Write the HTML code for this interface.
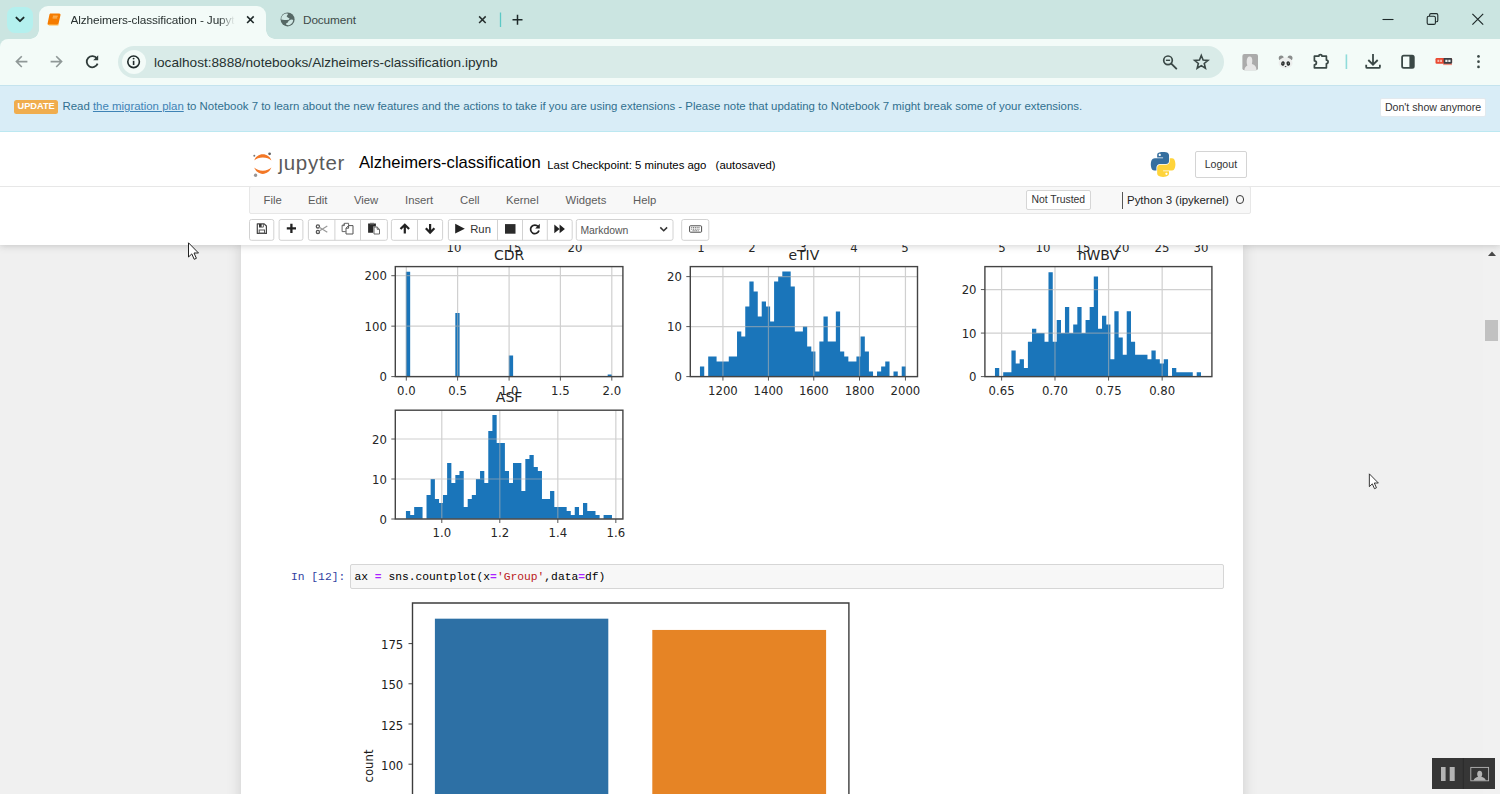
<!DOCTYPE html>
<html lang="en">
<head>
<meta charset="utf-8">
<title>Alzheimers-classification - Jupyter Notebook</title>
<style>
html,body{margin:0;padding:0;}
body{width:1500px;height:794px;overflow:hidden;position:relative;background:#f0f0f0;font-family:"Liberation Sans",Arial,sans-serif;color:#000;}
.abs{position:absolute;}
/* ---------- browser chrome ---------- */
#tabstrip{left:0;top:0;width:1500px;height:48px;background:#cbe5e1;}
#tabdrop{left:7px;top:7px;width:26px;height:26px;border-radius:8px;background:#b4f0ee;}
#tab1{left:39px;top:6px;width:227px;height:33.5px;background:#f3fbf8;border-radius:9px 9px 0 0;}
#tab1:before,#tab1:after{content:"";position:absolute;bottom:1px;width:9px;height:9px;}
#tab1:before{left:-9px;background:radial-gradient(circle at 0 0,rgba(0,0,0,0) 8.5px,#f3fbf8 9px);}
#tab1:after{right:-9px;background:radial-gradient(circle at 100% 0,rgba(0,0,0,0) 8.5px,#f3fbf8 9px);}
.tabtxt{font-size:11.8px;letter-spacing:-0.12px;color:#27302f;white-space:nowrap;top:13.2px;line-height:14px;}
#toolbar{left:0;top:38.7px;width:1500px;height:46.3px;background:#f3fbf8;border-radius:8px 0 0 0;}
#omni{left:117.8px;top:45.6px;width:1106.6px;height:32.1px;border-radius:16px;background:#d9ebe8;}
#omni .ic{left:4px;top:4px;width:24px;height:24px;border-radius:12px;background:#f3fbf8;}
#url{left:154px;top:54.7px;font-size:13.62px;line-height:16px;color:#263130;white-space:nowrap;}
/* ---------- banner ---------- */
#banner{left:0;top:84.5px;width:1500px;height:45px;background:#d9edf7;border-top:1px solid #c4e3ee;border-bottom:1px solid #bce8f1;box-sizing:content-box;}
#banner .msg{left:14px;top:13.6px;font-size:11.43px;line-height:14px;color:#31708f;white-space:nowrap;}
#banner .lbl{display:inline-block;background:#f0ad4e;color:#fff;font-weight:bold;font-size:9.2px;line-height:13.4px;padding:0 3.6px;border-radius:2.5px;vertical-align:0.8px;margin-right:1px;}
#banner u{color:#3f83b5;}
#dsa{left:1380px;top:12px;width:104px;height:17px;border:1px solid #e2e9ee;background:#fff;border-radius:2px;font-size:10.6px;line-height:16.5px;text-align:center;color:#333;box-sizing:content-box;}
/* ---------- jupyter header ---------- */
#header{left:0;top:130.5px;width:1500px;height:114.1px;background:#fff;box-shadow:0 1px 7px rgba(87,87,87,0.28);}
#hdrline{left:0;top:186.2px;width:1500px;height:1px;background:#e7e7e7;}
#jtext{left:278.4px;top:150.6px;font-size:20.5px;line-height:24px;color:#5a5a5a;letter-spacing:0.75px;white-space:nowrap;}
#nbname{left:359px;top:153px;font-size:16.6px;line-height:20px;color:#000;white-space:nowrap;}
#ckpt{left:547.3px;top:158px;font-size:11.37px;line-height:14px;color:#000;white-space:nowrap;}
#logout{left:1195px;top:151px;width:49.8px;height:24.8px;border:1px solid #d4d4d4;border-radius:2px;background:#fff;font-size:10.6px;line-height:25.6px;text-align:center;color:#333;box-sizing:content-box;}
#menubar{left:249px;top:186.2px;width:1001.5px;height:28.2px;background:#f8f8f8;border:1px solid #e7e7e7;border-radius:2px;box-sizing:border-box;}
.mi{top:192.7px;font-size:11.3px;line-height:14px;color:#5c5c5c;white-space:nowrap;}
#nottrusted{left:1025.8px;top:189.8px;width:63px;height:17.8px;border:1px solid #d6d6d6;background:#fff;border-radius:2px;font-size:10.4px;line-height:18.2px;text-align:center;color:#333;box-sizing:content-box;}
#kname{left:1127px;top:192.8px;font-size:11.45px;line-height:14px;color:#222;white-space:nowrap;}
#kbar{left:1121.5px;top:192px;width:1px;height:16.8px;background:#555;}
#kind{left:1235.7px;top:194.8px;width:6.8px;height:6.8px;border:1.8px solid #3a3a3a;border-radius:50%;box-sizing:content-box;}
.tb{top:219px;height:21px;border:1px solid #ccc;background:#fff;box-sizing:border-box;}
.tb.l{border-radius:2px 0 0 2px;}
.tb.r{border-radius:0 2px 2px 0;}
.tb.s{border-radius:2px;}
.tb svg{position:absolute;left:0;top:0;}
#runtxt{left:470.2px;top:221.8px;font-size:11.3px;line-height:14px;color:#333;}
#celltype{left:576px;top:219px;width:96px;height:21px;border:1px solid #ccc;border-radius:2px;background:#fff;box-sizing:border-box;}
#celltype span{position:absolute;left:3.5px;top:4.5px;font-size:10.2px;line-height:12px;color:#555;}
/* ---------- notebook ---------- */
#nbc{left:241px;top:244px;width:1002px;height:560px;background:#fff;box-shadow:0 0 12px 1px rgba(87,87,87,0.2);}
.plots{position:absolute;left:0;top:0;}
.plots text{font-family:"DejaVu Sans","Liberation Sans",sans-serif;}
.tk{font-size:11.7px;fill:#262626;}
.tk2{font-size:11.7px;fill:#1c1c1c;}
.tt{font-size:14px;fill:#262626;}
#prompt{left:291px;top:569.5px;font-family:"Liberation Mono","DejaVu Sans Mono",monospace;font-size:11.3px;line-height:14px;color:#303f9f;white-space:pre;}
#inarea{left:350px;top:563.5px;width:873.5px;height:25px;background:#f7f7f7;border:1px solid #d6d6d6;border-radius:2px;box-sizing:border-box;}
#code{left:354.5px;top:569.5px;font-family:"Liberation Mono","DejaVu Sans Mono",monospace;font-size:11.3px;line-height:14px;color:#000;white-space:pre;}
#code .o{color:#aa22ff;font-weight:bold;}
#code .s{color:#ba2121;}
/* ---------- scrollbar / overlays ---------- */
#sbar{left:1483px;top:245px;width:17px;height:549px;background:#f1f1f1;}
#sthumb{left:1485px;top:319.5px;width:13px;height:21px;background:#c1c1c1;}
#rec{left:1432px;top:758px;width:63px;height:31px;background:#363636;}
</style>
</head>
<body>
<!-- notebook area -->
<div id="nbc" class="abs"></div>
<svg class="plots" width="1500" height="794" viewBox="0 0 1500 794">
<text x="454" y="251.600" text-anchor="middle" class="tk">10</text>
<text x="514" y="251.600" text-anchor="middle" class="tk">15</text>
<text x="575" y="251.600" text-anchor="middle" class="tk">20</text>
<text x="701" y="251.600" text-anchor="middle" class="tk">1</text>
<text x="752" y="251.600" text-anchor="middle" class="tk">2</text>
<text x="803" y="251.600" text-anchor="middle" class="tk">3</text>
<text x="854" y="251.600" text-anchor="middle" class="tk">4</text>
<text x="905" y="251.600" text-anchor="middle" class="tk">5</text>
<text x="1002" y="251.600" text-anchor="middle" class="tk">5</text>
<text x="1043" y="251.600" text-anchor="middle" class="tk">10</text>
<text x="1083" y="251.600" text-anchor="middle" class="tk">15</text>
<text x="1122" y="251.600" text-anchor="middle" class="tk">20</text>
<text x="1162" y="251.600" text-anchor="middle" class="tk">25</text>
<text x="1201" y="251.600" text-anchor="middle" class="tk">30</text>
<path d="M405.9 376.6H410.17V271.66H405.9ZM455.32 376.6H459.58V313.03H455.32ZM508.85 376.6H513.12V355.41H508.85ZM607.68 376.6H611.95V374.58H607.68Z" fill="#1a75ba"/>
<path d="M406.3 266.6V376.6M457.6 266.6V376.6M509.1 266.6V376.6M560.4 266.6V376.6M611.8 266.6V376.6M395.3 376.6H622.9M395.3 326.15H622.9M395.3 275.7H622.9" stroke="#b0b0b0" stroke-width="1.2" fill="none" opacity="0.6"/>
<path d="M406.3 376.6v4M457.6 376.6v4M509.1 376.6v4M560.4 376.6v4M611.8 376.6v4M395.3 376.6h-4M395.3 326.15h-4M395.3 275.7h-4" stroke="#444444" stroke-width="0.9" fill="none"/>
<rect x="395.3" y="266.6" width="227.6" height="110" fill="none" stroke="#444444" stroke-width="1.4"/>
<text x="406.3" y="394.6" text-anchor="middle" class="tk">0.0</text>
<text x="457.6" y="394.6" text-anchor="middle" class="tk">0.5</text>
<text x="509.1" y="394.6" text-anchor="middle" class="tk">1.0</text>
<text x="560.4" y="394.6" text-anchor="middle" class="tk">1.5</text>
<text x="611.8" y="394.6" text-anchor="middle" class="tk">2.0</text>
<text x="386.9" y="381.2" text-anchor="end" class="tk">0</text>
<text x="386.9" y="330.75" text-anchor="end" class="tk">100</text>
<text x="386.9" y="280.3" text-anchor="end" class="tk">200</text>
<text x="509.1" y="259.6" text-anchor="middle" class="tt">CDR</text>
<path d="M699.96 376.6H704.23V366.6H699.96ZM708.2 376.6H712.46V356.6H708.2ZM712.31 376.6H716.58V356.6H712.31ZM716.43 376.6H720.7V361.6H716.43ZM720.55 376.6H724.82V361.6H720.55ZM724.67 376.6H728.93V361.6H724.67ZM728.78 376.6H733.05V356.6H728.78ZM732.9 376.6H737.17V356.6H732.9ZM737.02 376.6H741.29V331.6H737.02ZM741.14 376.6H745.4V336.6H741.14ZM745.25 376.6H749.52V306.6H745.25ZM749.37 376.6H753.64V281.6H749.37ZM753.49 376.6H757.76V291.6H753.49ZM757.61 376.6H761.87V316.6H757.61ZM761.72 376.6H765.99V301.6H761.72ZM765.84 376.6H770.11V306.6H765.84ZM769.96 376.6H774.23V321.6H769.96ZM774.08 376.6H778.35V281.6H774.08ZM778.2 376.6H782.46V276.6H778.2ZM782.31 376.6H786.58V271.6H782.31ZM786.43 376.6H790.7V271.6H786.43ZM790.55 376.6H794.82V286.6H790.55ZM794.67 376.6H798.93V331.6H794.67ZM798.78 376.6H803.05V331.6H798.78ZM802.9 376.6H807.17V326.6H802.9ZM807.02 376.6H811.29V346.6H807.02ZM811.14 376.6H815.4V351.6H811.14ZM815.25 376.6H819.52V371.6H815.25ZM819.37 376.6H823.64V341.6H819.37ZM823.49 376.6H827.76V316.6H823.49ZM827.61 376.6H831.87V341.6H827.61ZM831.72 376.6H835.99V341.6H831.72ZM835.84 376.6H840.11V311.6H835.84ZM839.96 376.6H844.23V351.6H839.96ZM844.08 376.6H848.35V356.6H844.08ZM848.2 376.6H852.46V361.6H848.2ZM852.31 376.6H856.58V361.6H852.31ZM856.43 376.6H860.7V356.6H856.43ZM860.55 376.6H864.82V336.6H860.55ZM864.67 376.6H868.93V351.6H864.67ZM868.78 376.6H873.05V371.6H868.78ZM877.02 376.6H881.29V371.6H877.02ZM881.14 376.6H885.4V366.6H881.14ZM885.25 376.6H889.52V361.6H885.25ZM893.49 376.6H897.76V371.6H893.49ZM901.72 376.6H905.99V366.6H901.72Z" fill="#1a75ba"/>
<path d="M722.93 266.6V376.6M768.45 266.6V376.6M813.78 266.6V376.6M859.51 266.6V376.6M905.44 266.6V376.6M690.3 376.6H917.5M690.3 326.6H917.5M690.3 276.6H917.5" stroke="#b0b0b0" stroke-width="1.2" fill="none" opacity="0.6"/>
<path d="M722.93 376.6v4M768.45 376.6v4M813.78 376.6v4M859.51 376.6v4M905.44 376.6v4M690.3 376.6h-4M690.3 326.6h-4M690.3 276.6h-4" stroke="#444444" stroke-width="0.9" fill="none"/>
<rect x="690.3" y="266.6" width="227.2" height="110" fill="none" stroke="#444444" stroke-width="1.4"/>
<text x="722.93" y="394.6" text-anchor="middle" class="tk">1200</text>
<text x="768.45" y="394.6" text-anchor="middle" class="tk">1400</text>
<text x="813.78" y="394.6" text-anchor="middle" class="tk">1600</text>
<text x="859.51" y="394.6" text-anchor="middle" class="tk">1800</text>
<text x="905.44" y="394.6" text-anchor="middle" class="tk">2000</text>
<text x="681.9" y="381.2" text-anchor="end" class="tk">0</text>
<text x="681.9" y="331.2" text-anchor="end" class="tk">10</text>
<text x="681.9" y="281.2" text-anchor="end" class="tk">20</text>
<text x="803.9" y="259.6" text-anchor="middle" class="tt">eTIV</text>
<path d="M994.96 376.6H999.23V367.9H994.96ZM1003.2 376.6H1007.46V372.25H1003.2ZM1007.31 376.6H1011.58V372.25H1007.31ZM1011.43 376.6H1015.7V350.49H1011.43ZM1015.55 376.6H1019.82V363.55H1015.55ZM1019.67 376.6H1023.93V359.19H1019.67ZM1023.78 376.6H1028.05V367.9H1023.78ZM1027.9 376.6H1032.17V341.79H1027.9ZM1032.02 376.6H1036.29V328.74H1032.02ZM1036.14 376.6H1040.4V333.09H1036.14ZM1040.25 376.6H1044.52V333.09H1040.25ZM1044.37 376.6H1048.64V341.79H1044.37ZM1048.49 376.6H1052.76V272.17H1048.49ZM1052.61 376.6H1056.87V341.79H1052.61ZM1056.72 376.6H1060.99V320.03H1056.72ZM1060.84 376.6H1065.11V333.09H1060.84ZM1064.96 376.6H1069.23V306.98H1064.96ZM1069.08 376.6H1073.35V333.09H1069.08ZM1073.2 376.6H1077.46V324.38H1073.2ZM1077.31 376.6H1081.58V306.98H1077.31ZM1081.43 376.6H1085.7V333.09H1081.43ZM1085.55 376.6H1089.82V320.03H1085.55ZM1089.67 376.6H1093.93V306.98H1089.67ZM1093.78 376.6H1098.05V276.52H1093.78ZM1097.9 376.6H1102.17V328.74H1097.9ZM1102.02 376.6H1106.29V315.68H1102.02ZM1106.14 376.6H1110.4V324.38H1106.14ZM1110.25 376.6H1114.52V359.19H1110.25ZM1114.37 376.6H1118.64V311.33H1114.37ZM1118.49 376.6H1122.76V337.44H1118.49ZM1122.61 376.6H1126.87V354.84H1122.61ZM1126.72 376.6H1130.99V311.33H1126.72ZM1130.84 376.6H1135.11V341.79H1130.84ZM1134.96 376.6H1139.23V354.84H1134.96ZM1139.08 376.6H1143.35V354.84H1139.08ZM1143.2 376.6H1147.46V354.84H1143.2ZM1147.31 376.6H1151.58V359.19H1147.31ZM1151.43 376.6H1155.7V350.49H1151.43ZM1155.55 376.6H1159.82V359.19H1155.55ZM1159.67 376.6H1163.93V363.55H1159.67ZM1163.78 376.6H1168.05V359.19H1163.78ZM1172.02 376.6H1176.29V367.9H1172.02ZM1176.14 376.6H1180.4V372.25H1176.14ZM1180.25 376.6H1184.52V372.25H1180.25ZM1184.37 376.6H1188.64V372.25H1184.37ZM1188.49 376.6H1192.76V372.25H1188.49ZM1196.72 376.6H1200.99V372.25H1196.72Z" fill="#1a75ba"/>
<path d="M1001.61 266.6V376.6M1054.99 266.6V376.6M1108.58 266.6V376.6M1162.16 266.6V376.6M984.9 376.6H1211.9M984.9 333.09H1211.9M984.9 289.57H1211.9" stroke="#b0b0b0" stroke-width="1.2" fill="none" opacity="0.6"/>
<path d="M1001.61 376.6v4M1054.99 376.6v4M1108.58 376.6v4M1162.16 376.6v4M984.9 376.6h-4M984.9 333.09h-4M984.9 289.57h-4" stroke="#444444" stroke-width="0.9" fill="none"/>
<rect x="984.9" y="266.6" width="227" height="110" fill="none" stroke="#444444" stroke-width="1.4"/>
<text x="1001.61" y="394.6" text-anchor="middle" class="tk">0.65</text>
<text x="1054.99" y="394.6" text-anchor="middle" class="tk">0.70</text>
<text x="1108.58" y="394.6" text-anchor="middle" class="tk">0.75</text>
<text x="1162.16" y="394.6" text-anchor="middle" class="tk">0.80</text>
<text x="976.5" y="381.2" text-anchor="end" class="tk">0</text>
<text x="976.5" y="337.69" text-anchor="end" class="tk">10</text>
<text x="976.5" y="294.17" text-anchor="end" class="tk">20</text>
<text x="1098.4" y="259.6" text-anchor="middle" class="tt">nWBV</text>
<path d="M405.93 519H410.2V511H405.93ZM410.05 519H414.32V515H410.05ZM414.17 519H418.43V507H414.17ZM418.28 519H422.55V507H418.28ZM426.52 519H430.79V495.01H426.52ZM430.64 519H434.9V479.01H430.64ZM434.75 519H439.02V499.01H434.75ZM438.87 519H443.14V503H438.87ZM442.99 519H447.26V495.01H442.99ZM447.11 519H451.37V463.02H447.11ZM451.22 519H455.49V483.01H451.22ZM455.34 519H459.61V475.01H455.34ZM459.46 519H463.73V471.01H459.46ZM463.58 519H467.85V507H463.58ZM467.7 519H471.96V499.01H467.7ZM471.81 519H476.08V495.01H471.81ZM475.93 519H480.2V479.01H475.93ZM480.05 519H484.32V471.01H480.05ZM484.17 519H488.43V483.01H484.17ZM488.28 519H492.55V431.03H488.28ZM492.4 519H496.67V415.03H492.4ZM496.52 519H500.79V443.02H496.52ZM500.64 519H504.9V443.02H500.64ZM504.75 519H509.02V471.01H504.75ZM508.87 519H513.14V483.01H508.87ZM512.99 519H517.26V463.02H512.99ZM517.11 519H521.37V463.02H517.11ZM521.22 519H525.49V491.01H521.22ZM525.34 519H529.61V459.02H525.34ZM529.46 519H533.73V455.02H529.46ZM533.58 519H537.85V467.02H533.58ZM537.7 519H541.96V471.01H537.7ZM541.81 519H546.08V499.01H541.81ZM545.93 519H550.2V499.01H545.93ZM550.05 519H554.32V491.01H550.05ZM554.17 519H558.43V507H554.17ZM558.28 519H562.55V507H558.28ZM562.4 519H566.67V507H562.4ZM566.52 519H570.79V511H566.52ZM570.64 519H574.9V515H570.64ZM574.75 519H579.02V507H574.75ZM578.87 519H583.14V515H578.87ZM582.99 519H587.26V503H582.99ZM587.11 519H591.37V511H587.11ZM591.22 519H595.49V511H591.22ZM595.34 519H599.61V515H595.34ZM603.58 519H607.85V515H603.58ZM607.7 519H611.96V515H607.7Z" fill="#1a75ba"/>
<path d="M441.79 410.2V519M499.81 410.2V519M557.82 410.2V519M615.84 410.2V519M395.3 519H622.9M395.3 479.01H622.9M395.3 439.02H622.9" stroke="#b0b0b0" stroke-width="1.2" fill="none" opacity="0.6"/>
<path d="M441.79 519v4M499.81 519v4M557.82 519v4M615.84 519v4M395.3 519h-4M395.3 479.01h-4M395.3 439.02h-4" stroke="#444444" stroke-width="0.9" fill="none"/>
<rect x="395.3" y="410.2" width="227.6" height="108.8" fill="none" stroke="#444444" stroke-width="1.4"/>
<text x="441.79" y="537" text-anchor="middle" class="tk">1.0</text>
<text x="499.81" y="537" text-anchor="middle" class="tk">1.2</text>
<text x="557.82" y="537" text-anchor="middle" class="tk">1.4</text>
<text x="615.84" y="537" text-anchor="middle" class="tk">1.6</text>
<text x="386.9" y="523.6" text-anchor="end" class="tk">0</text>
<text x="386.9" y="483.61" text-anchor="end" class="tk">10</text>
<text x="386.9" y="443.62" text-anchor="end" class="tk">20</text>
<text x="509.1" y="401.5" text-anchor="middle" class="tt">ASF</text>
<rect x="434.9" y="618.68" width="173.4" height="200" fill="#2d70a5"/>
<rect x="652.3" y="629.94" width="173.8" height="200" fill="#e68425"/>
<path d="M412.5 800V603H848.9V800" fill="none" stroke="#3c3c3c" stroke-width="1.4"/>
<text x="403.3" y="649.1" text-anchor="end" class="tk2">175</text>
<text x="403.3" y="689.3" text-anchor="end" class="tk2">150</text>
<text x="403.3" y="729.5" text-anchor="end" class="tk2">125</text>
<text x="403.3" y="769.7" text-anchor="end" class="tk2">100</text>
<path d="M412.5 643.6h-4M412.5 683.8h-4M412.5 724h-4M412.5 764.2h-4" stroke="#2a2a2a" stroke-width="0.9" fill="none"/>
<text transform="translate(372.800 766) rotate(-90)" text-anchor="middle" class="tk2">count</text>
</svg>
<div id="prompt" class="abs">In [12]:</div>
<div id="inarea" class="abs"></div>
<div id="code" class="abs">ax <span class="o">=</span> sns.countplot(x<span class="o">=</span><span class="s">'Group'</span>,data<span class="o">=</span>df)</div>
<div id="sbar" class="abs"></div>
<div id="sthumb" class="abs"></div>
<svg class="abs" style="left:1486px;top:249px" width="12" height="8" viewBox="0 0 12 8"><path d="M2 7L6 2.400L10 7Z" fill="#484848"/></svg>

<!-- jupyter header -->
<div id="header" class="abs"></div>
<div id="hdrline" class="abs"></div>
<svg class="abs" style="left:0;top:130px" width="1500" height="120" viewBox="0 130 1500 120" fill="none">
<!-- jupyter logo -->
<path d="M254.200 160.400C255.600 156.600 258.900 154.300 262.800 154.300C266.700 154.300 270 156.600 271.400 160.400C269.400 158.400 266.300 157.400 262.800 157.400C259.300 157.400 256.200 158.400 254.200 160.400Z" fill="#f37726"/>
<path d="M254.200 167.600C255.600 171.400 258.900 173.900 262.800 173.900C266.700 173.900 270 171.400 271.400 167.600C269.400 169.600 266.300 170.700 262.800 170.700C259.300 170.700 256.200 169.600 254.200 167.600Z" fill="#f37726"/>
<circle cx="254.300" cy="155.800" r="1" fill="#767677"/>
<circle cx="269.600" cy="153.800" r="1.400" fill="#616262"/>
<circle cx="255.600" cy="175.200" r="1.700" fill="#989798"/>
<!-- python logo -->
<g transform="translate(1150.800 152) scale(0.2215)">
<path fill="#366f9f" d="M54.919 0C50.335 .022 45.958 .413 42.106 1.095 30.760 3.099 28.700 7.295 28.700 15.032v10.219h26.813v3.406H18.638c-7.792 0-14.616 4.684-16.750 13.594-2.462 10.213-2.571 16.586 0 27.250 1.906 7.938 6.458 13.594 14.250 13.594h9.219v-12.250c0-8.850 7.657-16.656 16.750-16.656h26.781c7.455 0 13.406-6.138 13.406-13.625V15.032c0-7.266-6.130-12.725-13.406-13.937C64.282 .328 59.502-.020 54.919 0zM40.419 8.220c2.770 0 5.031 2.299 5.031 5.125 0 2.816-2.262 5.094-5.031 5.094-2.779 0-5.031-2.277-5.031-5.094 0-2.826 2.252-5.125 5.031-5.125z"/>
<path fill="#ffd43b" d="M85.638 28.657v11.906c0 9.231-7.826 17-16.750 17H42.106c-7.336 0-13.406 6.278-13.406 13.625v25.531c0 7.266 6.319 11.540 13.406 13.625 8.487 2.496 16.626 2.947 26.781 0 6.750-1.954 13.406-5.888 13.406-13.625V86.501H55.513v-3.406h40.188c7.792 0 10.696-5.435 13.406-13.594 2.799-8.399 2.680-16.476 0-27.250-1.926-7.757-5.604-13.594-13.406-13.594zM70.575 93.313c2.779 0 5.031 2.277 5.031 5.094 0 2.826-2.252 5.125-5.031 5.125-2.770 0-5.031-2.299-5.031-5.125 0-2.816 2.262-5.094 5.031-5.094z"/>
</g>
</svg>

<div id="jtext" class="abs">jupyter</div>
<div class="abs" style="left:279px;top:153.5px;width:4px;height:4.2px;background:#fff"></div>
<div id="nbname" class="abs">Alzheimers-classification</div>
<div id="ckpt" class="abs">Last Checkpoint: 5 minutes ago<span style="position:absolute;left:168.3px;top:0">(autosaved)</span></div>
<!--PYLOGO-->
<div id="logout" class="abs">Logout</div>
<div id="menubar" class="abs"></div>
<div class="abs mi" style="left:263.5px">File</div>
<div class="abs mi" style="left:308px">Edit</div>
<div class="abs mi" style="left:354px">View</div>
<div class="abs mi" style="left:405px">Insert</div>
<div class="abs mi" style="left:460px">Cell</div>
<div class="abs mi" style="left:506px">Kernel</div>
<div class="abs mi" style="left:565.5px">Widgets</div>
<div class="abs mi" style="left:633px">Help</div>
<div id="nottrusted" class="abs">Not Trusted</div>
<div id="kbar" class="abs"></div>
<div id="kname" class="abs">Python 3 (ipykernel)</div>
<div id="kind" class="abs"></div>
<svg class="abs" style="left:0;top:215px" width="1500" height="30" viewBox="0 215 1500 30" fill="none">
<g stroke="#d2d2d2" stroke-width="1" fill="#fff">
<rect x="249.500" y="219.500" width="24.300" height="20.800" rx="2"/>
<rect x="279.100" y="219.500" width="23.800" height="20.800" rx="2"/>
<rect x="308.400" y="219.500" width="79" height="20.800" rx="2"/>
<rect x="391.400" y="219.500" width="51.200" height="20.800" rx="2"/>
<rect x="448.400" y="219.500" width="123.800" height="20.800" rx="2"/>
<rect x="576.300" y="219.500" width="96.700" height="20.800" rx="2"/>
<rect x="681.700" y="219.500" width="27.100" height="20.800" rx="2"/>
<path d="M334.900 219.500v20.800M360.500 219.500v20.800M417.500 219.500v20.800M497.500 219.500v20.800M522.500 219.500v20.800M547.300 219.500v20.800" fill="none"/>
</g>
<!-- save (floppy) -->
<path d="M257.300 223.800h6.900l2.200 2.200v7.400h-9.100z" stroke="#444" stroke-width="1.200" stroke-linejoin="round"/>
<rect x="259" y="224" width="2.600" height="3.100" fill="#333"/>
<path d="M259 227.100h4.400v-3.200" stroke="#555" stroke-width="0.900"/>
<rect x="259.200" y="230" width="5.300" height="3.200" stroke="#555" stroke-width="1"/>
<!-- plus -->
<path d="M286.800 228.400h9.200M291.400 223.700v9.400" stroke="#222" stroke-width="2.300"/>
<!-- scissors -->
<circle cx="317.900" cy="226.400" r="1.600" stroke="#555" stroke-width="1.300"/>
<circle cx="317.900" cy="231.900" r="1.600" stroke="#555" stroke-width="1.300"/>
<path d="M319.300 227.300l8 4.900M319.300 231l8-4.900" stroke="#9a9a9a" stroke-width="1.200"/>
<!-- copy -->
<path d="M344.400 223.300h4.200v2.400M344.400 223.300l-2.300 2.300v6h3.600M342.100 225.600h2.300v-2.300" stroke="#666" stroke-width="1"/>
<path d="M348.600 225.600h4.400v8.400h-7v-5.800l2.600-2.600zM346 228.200h2.600v-2.600" stroke="#555" stroke-width="1"/>
<!-- paste -->
<path d="M368.100 223.600h7.800v3h-2.600v6.200h-5.200z" fill="#2b2b2b"/>
<rect x="370" y="222.800" width="4" height="1.600" fill="#777"/>
<path d="M374 227h3.200l2.300 2.300v4.700h-5.500zM377.200 227v2.300h2.300" stroke="#666" stroke-width="1" fill="#fff"/>
<!-- up / down arrows -->
<path d="M404.800 233.400v-7.800M400.500 229l4.300-4.300 4.300 4.300" stroke="#222" stroke-width="2.200"/>
<path d="M430.100 223.900v7.800M425.800 228.300l4.300 4.300 4.300-4.300" stroke="#222" stroke-width="2.200"/>
<!-- play -->
<path d="M455.200 223.800l9.600 4.900-9.600 4.900z" fill="#222"/>
<!-- stop -->
<rect x="505" y="224.100" width="10.500" height="9.600" fill="#2b2b2b"/>
<!-- restart -->
<path d="M538.200 226.600A4.300 4.300 0 1 0 539 230.600" stroke="#222" stroke-width="1.700"/>
<path d="M539.800 223.800v4.600h-4.600z" fill="#222"/>
<!-- fast-forward -->
<path d="M554.300 224.600l5.300 4.300-5.300 4.300zM559.600 224.600l5.300 4.300-5.300 4.300z" fill="#222"/>
<!-- chevron -->
<path d="M660.300 227.400l3.400 3.400 3.400-3.400" stroke="#333" stroke-width="1.500"/>
<!-- keyboard -->
<rect x="689.600" y="225.800" width="12" height="6.400" rx="0.800" stroke="#4a4a4a" stroke-width="1"/>
<path d="M691.200 227.600h8.800M691.200 229.200h8.800M692.600 230.700h6" stroke="#4a4a4a" stroke-width="0.800" stroke-dasharray="1.100 0.700"/>
</svg>

<div id="runtxt" class="abs">Run</div>
<div class="abs" id="ctxt" style="left:580.400px;top:225.400px;font-size:10.400px;line-height:12px;color:#555">Markdown</div>

<!-- banner -->
<div id="banner" class="abs">
  <div class="abs msg"><span class="lbl">UPDATE</span> Read <u>the migration plan</u> to Notebook 7 to learn about the new features and the actions to take if you are using extensions - Please note that updating to Notebook 7 might break some of your extensions.</div>
  <div id="dsa" class="abs">Don't show anymore</div>
</div>

<!-- browser chrome -->
<div id="tabstrip" class="abs"></div>
<div id="tabdrop" class="abs"></div>
<div id="tab1" class="abs"></div>
<div id="toolbar" class="abs"></div>
<div class="abs tabtxt" style="left:70.6px;width:166px;overflow:hidden;-webkit-mask-image:linear-gradient(90deg,#000 148px,transparent 164px);mask-image:linear-gradient(90deg,#000 148px,transparent 164px);">Alzheimers-classification - Jupyter Notebook</div>
<div class="abs tabtxt" style="left:303px;color:#3d4a48">Document</div>
<div id="omni" class="abs"><div class="abs ic"></div></div>
<div id="url" class="abs">localhost:8888/notebooks/Alzheimers-classification.ipynb</div>
<svg class="abs" style="left:0;top:0" width="1500" height="90" viewBox="0 0 1500 90" fill="none">
<!-- tab dropdown chevron -->
<path d="M16.4 17.6L20 21.2L23.6 17.6" stroke="#1b2b2a" stroke-width="1.9" stroke-linecap="round" stroke-linejoin="round"/>
<!-- favicon: orange book -->
<g>
<path d="M50.6 13.4h8.6c.9 0 1.5.8 1.3 1.6l-1.9 8.6c-.2.8-.9 1.4-1.7 1.4h-8.2c-.8 0-1.3-.7-1.100-1.400l1.800-8.800c.1-.8.5-1.400 1.200-1.400z" fill="#f57c00"/>
<path d="M48.100 24.200c.2.900.9 1.400 1.700 1.400h7.800c.7 0 1.200-.4 1.500-1z" fill="#ffb74d"/>
<path d="M52.900 16.200h4.800M52.600 17.900h4.600" stroke="#ffcc80" stroke-width="0.9"/>
</g>
<!-- tab close 1 -->
<path d="M247.100 16.400l6.600 6.600M253.700 16.400l-6.600 6.600" stroke="#1f2a2a" stroke-width="1.600"/>
<!-- globe -->
<circle cx="287.600" cy="19.400" r="7" fill="#566865"/>
<path d="M281.400 17.600C281.900 15.800 283.300 14.300 285.200 13.700C286.200 13.500 287.200 13.500 288.100 13.900L286.600 16.300L287.800 17.500L289.600 18.600L288.900 19.700L286.600 20.100L284.400 19.900L281.300 19.600Z" fill="#cfe7e3"/>
<path d="M293.200 20.100C293.100 21.100 292.800 22 292.300 22.800C291.600 23.800 290.700 24.600 289.600 25C288.500 25.300 287.300 25.200 286.200 24.800L286.100 23.500L287.800 22.400L288.500 20.900L290.400 19.700L291.900 19.500Z" fill="#cfe7e3"/>
<!-- tab close 2 -->
<path d="M479.100 16.400l6.600 6.600M485.700 16.400l-6.600 6.600" stroke="#27302f" stroke-width="1.500"/>
<path d="M500.500 12.500v14.500" stroke="#5cc8c5" stroke-width="1.300"/>
<path d="M512.500 19.700h10M517.500 14.700v10" stroke="#1f2a2a" stroke-width="1.500"/>
<!-- window controls -->
<path d="M1382.500 19.500h11" stroke="#1f2a2a" stroke-width="1.100"/>
<rect x="1427.200" y="16.200" width="8.200" height="8.200" rx="1.500" stroke="#1f2a2a" stroke-width="1.100"/>
<path d="M1429.600 16v-1c0-.8.600-1.400 1.400-1.400h5.400c.8 0 1.400.6 1.400 1.400v5.400c0 .8-.6 1.400-1.400 1.400h-.9" stroke="#1f2a2a" stroke-width="1.100"/>
<path d="M1472.400 13.800l10.800 10.800M1483.200 13.800l-10.800 10.800" stroke="#1f2a2a" stroke-width="1.200"/>
<!-- back / forward -->
<path d="M27.400 61.600H16.600M21.800 56.200L16.400 61.600L21.800 67" stroke="#8f9897" stroke-width="1.600" stroke-linejoin="miter"/>
<path d="M50.600 61.600H61.400M56.200 56.200L61.600 61.600L56.200 67" stroke="#8f9897" stroke-width="1.600"/>
<!-- reload -->
<path d="M96.900 58.400A5.600 5.600 0 1 0 97.600 63.600" stroke="#2f3b3a" stroke-width="1.800"/>
<path d="M98.200 55.200v5h-5z" fill="#2f3b3a"/>
<!-- info -->
<circle cx="133.600" cy="61.800" r="5.800" stroke="#1f2a2a" stroke-width="1.600"/>
<path d="M133.600 60.800v4.200" stroke="#1f2a2a" stroke-width="1.600"/>
<circle cx="133.600" cy="58.600" r="0.950" fill="#1f2a2a"/>
<!-- zoom out -->
<circle cx="1168" cy="60.300" r="4.300" stroke="#3a4846" stroke-width="1.700"/>
<path d="M1171.300 63.600l5 5" stroke="#3a4846" stroke-width="1.900" stroke-linecap="round"/>
<path d="M1165.900 60.300h4.200" stroke="#3a4846" stroke-width="1.400"/>
<!-- star -->
<path d="M1201.30 55.50L1203.12 59.99L1207.96 60.34L1204.25 63.46L1205.41 68.16L1201.30 65.60L1197.19 68.16L1198.35 63.46L1194.64 60.34L1199.48 59.99Z" stroke="#3a4846" stroke-width="1.600" stroke-linejoin="miter"/>
<!-- grey avatar ext -->
<rect x="1242.400" y="54" width="15.600" height="16.200" rx="2" fill="#ababab"/>
<path d="M1244.400 70.200c.2-2.600 1.300-4 3-4.800-.5-1.200-.8-2.600-.7-4.400.1-2.600 1.200-4.600 3-4.600 1.700 0 2.600 1.700 2.600 3.800 0 1.400-.2 2.600-.4 3.800 1.900.4 3.600 1.600 4.100 3.600l.5 2.600z" fill="#e6e6e6"/>
<!-- panda -->
<circle cx="1281.200" cy="57.900" r="2.500" fill="#8a8d8c"/>
<circle cx="1290" cy="57.900" r="2.500" fill="#8a8d8c"/>
<ellipse cx="1285.600" cy="62.900" rx="7" ry="5.600" fill="#eceeed"/>
<ellipse cx="1282.900" cy="63.500" rx="1.800" ry="2.300" fill="#2e3231" transform="rotate(15 1282.900 63.500)"/>
<ellipse cx="1288.300" cy="63.500" rx="1.800" ry="2.300" fill="#2e3231" transform="rotate(-15 1288.300 63.500)"/>
<circle cx="1282.800" cy="63.300" r="0.500" fill="#9a9e9d"/><circle cx="1288.400" cy="63.300" r="0.500" fill="#9a9e9d"/>
<path d="M1284.500 66l1.100 1.300 1.100-1.300z" fill="#2e3231"/>
<!-- puzzle -->
<path d="M1314.400 56.200h4.400a1.600 1.600 0 0 1 3.200 0h4.400v3.900a1.700 1.700 0 0 1 0 3.400v4.300h-12v-3a2 2 0 0 0 0-4z" stroke="#3a4846" stroke-width="1.700" stroke-linejoin="round"/>
<path d="M1346.400 54.400v14.600" stroke="#8fdcda" stroke-width="1.600"/>
<!-- download -->
<path d="M1373 54v10M1368.300 60l4.700 4.700 4.700-4.700" stroke="#3a4846" stroke-width="1.800"/>
<path d="M1366.200 64.800v2.100a1 1 0 0 0 1 1h11.700a1 1 0 0 0 1-1v-2.100" stroke="#3a4846" stroke-width="1.800"/>
<!-- side panel -->
<rect x="1402.100" y="55.700" width="11.700" height="12.200" rx="1.600" stroke="#3a4846" stroke-width="1.800"/>
<path d="M1409.400 55.700h3a1.400 1.400 0 0 1 1.400 1.400v9.400a1.400 1.400 0 0 1-1.400 1.400h-3z" fill="#3a4846"/>
<!-- red ext -->
<rect x="1435.500" y="58.100" width="16.600" height="5.600" rx="1.200" fill="#ea4a33"/>
<path d="M1443.700 58.100h7.200a1.200 1.200 0 0 1 1.200 1.200v3.200a1.200 1.200 0 0 1-1.200 1.200h-7.200z" fill="#3b3f44"/>
<path d="M1437.400 60.900h4.600" stroke="#f6b8ad" stroke-width="2.200" stroke-dasharray="1.900 0.800"/>
<path d="M1445.300 60.900h5.200" stroke="#e9ecec" stroke-width="2.200" stroke-dasharray="2.200 0.800"/>
<path d="M1443.200 64.600h8.800" stroke="#ee6a58" stroke-width="0.800"/>
<!-- menu dots -->
<circle cx="1478.500" cy="56.400" r="1.350" fill="#3a4846"/><circle cx="1478.500" cy="61.650" r="1.350" fill="#3a4846"/><circle cx="1478.500" cy="66.900" r="1.350" fill="#3a4846"/>
</svg>


<!-- overlays -->
<div id="rec" class="abs"></div>
<svg class="abs" style="left:0;top:0" width="1500" height="794" viewBox="0 0 1500 794" fill="none">
<!-- recorder widget -->
<path d="M1463.300 758v31" stroke="#2b2b2b" stroke-width="1"/>
<rect x="1441" y="767" width="4.600" height="14" fill="#b4b4b4"/>
<rect x="1449.700" y="767" width="5" height="14" fill="#b4b4b4"/>
<rect x="1470.800" y="767.400" width="17.800" height="13.400" stroke="#b4b4b4" stroke-width="0.900"/>
<path d="M1473.500 780.600c.6-2.400 2.600-3 4.600-3.800-.8-1-1.100-2.300-.8-3.800.3-1.500 1.200-2.300 2.400-2.300s2.100.8 2.400 2.300c.3 1.500 0 2.800-.8 3.800 2 .8 4 1.400 4.600 3.800z" fill="#b4b4b4"/>
<!-- mouse cursors -->
<g transform="translate(188 242.300)">
<path d="M.5.500v14.200l3.300-3.100 2.400 5.400 2.200-1-2.400-5.300h4.500z" fill="#fff" stroke="#222" stroke-width="1" stroke-linejoin="round"/>
</g>
<g transform="translate(1368.900 473.400) scale(0.900)">
<path d="M.5.500v14.200l3.300-3.100 2.400 5.400 2.200-1-2.400-5.300h4.500z" fill="#fff" stroke="#222" stroke-width="1" stroke-linejoin="round"/>
</g>
</svg>

</body>
</html>
